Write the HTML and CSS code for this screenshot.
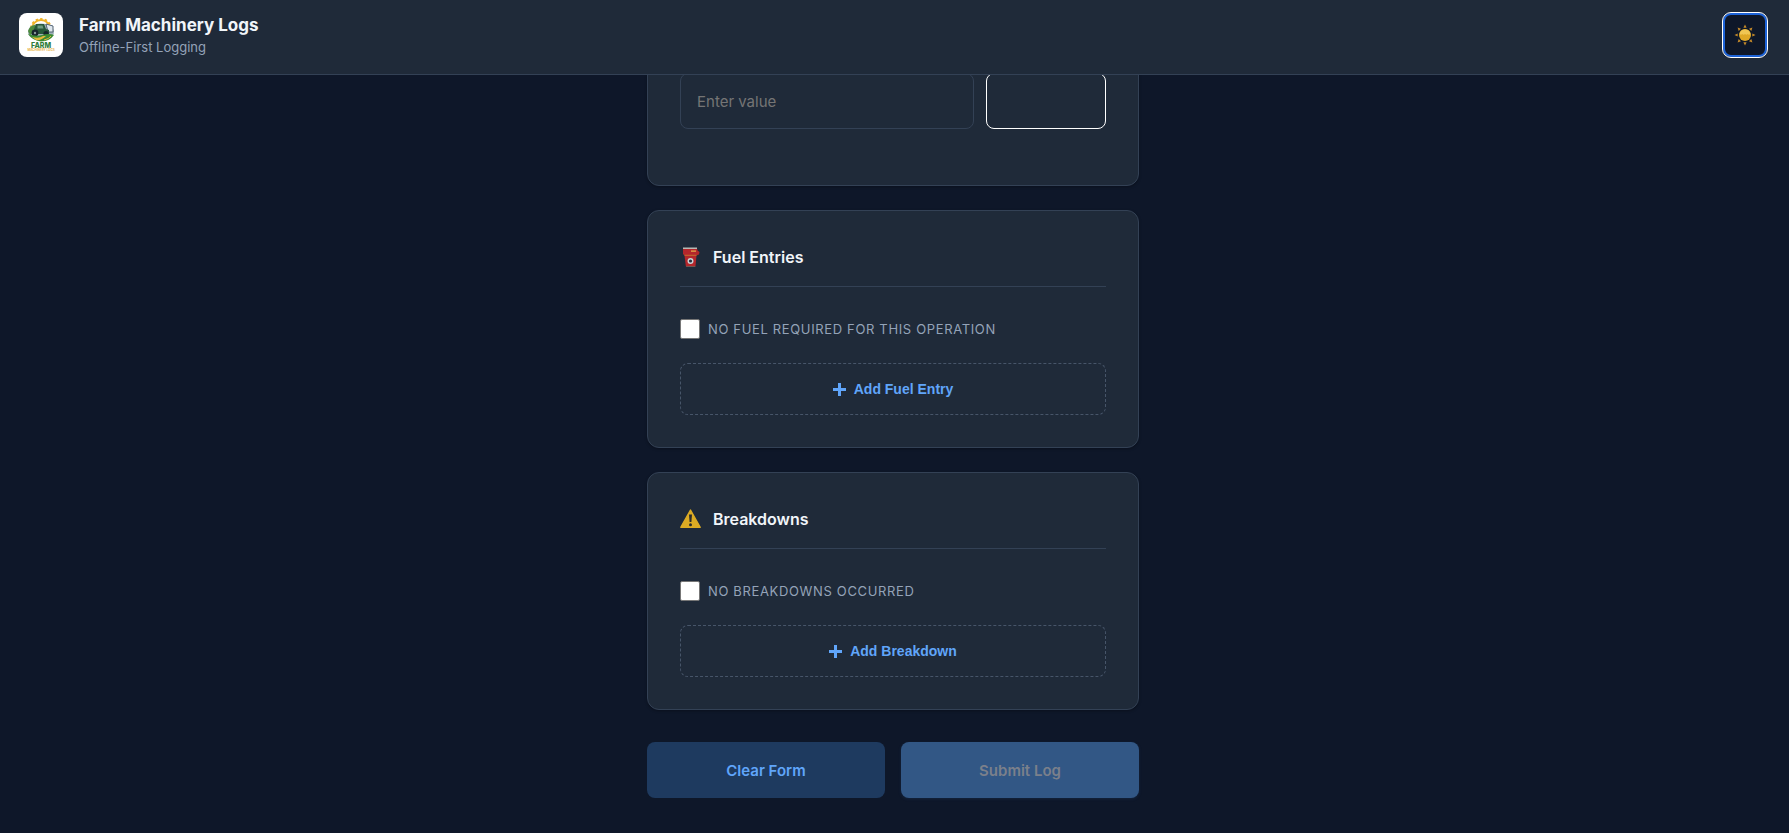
FILE: index.html
```html
<!DOCTYPE html>
<html lang="en">
<head>
  <meta charset="UTF-8">
  <meta name="viewport" content="width=device-width, initial-scale=1.0">
  <title>Farm Machinery Logs</title>
  <link rel="stylesheet" href="styles.css">
</head>
<body>

<header class="app-header">
  <div class="brand">
    <div class="logo">
      <svg width="30" height="34" viewBox="0 0 30 34" aria-hidden="true">
        <circle cx="15" cy="11" r="9" fill="none" stroke="#f0b429" stroke-width="2"/>
        <circle cx="15" cy="11" r="10" fill="none" stroke="#f0b429" stroke-width="2" stroke-dasharray="2.4 2.2"/>
        <ellipse cx="15" cy="14" rx="13" ry="8.5" fill="#9fb1b8"/>
        <path d="M2 13 Q4 7 9 7 L12 12 L4 17Z" fill="#4c8a3d"/>
        <path d="M20 6 L27 8 L27 14 L22 14Z" fill="#dfe7ee" stroke="#526273" stroke-width="1"/>
        <path d="M10 6h8l2 5 3 1v4H8v-5z" fill="#28583a"/>
        <path d="M11.5 7.5h5l1 3h-6z" fill="#6d9a80"/>
        <circle cx="9" cy="15" r="3.4" fill="#17252c"/>
        <circle cx="9" cy="15" r="1.2" fill="#8b989c"/>
        <circle cx="20" cy="15.5" r="2.6" fill="#17252c"/>
        <path d="M2 16 Q10 19 16 17 Q23 15 28 17 Q24 23 15 23.5 Q7 23 2 16Z" fill="#3c8b32"/>
        <path d="M6 19 Q13 21 17 18 L20 18 Q15 23 10 22Z" fill="#e5b83c"/>
        <path d="M18 22 Q23 21 25 18" fill="none" stroke="#e5b83c" stroke-width="1"/>
        <text x="15" y="29.5" text-anchor="middle" class="logo-name">FARM</text>
        <text x="15" y="33" text-anchor="middle" class="logo-sub">MACHINERY LOGS</text>
      </svg>
    </div>
    <div class="brand-text">
      <h1>Farm Machinery Logs</h1>
      <p>Offline-First Logging</p>
    </div>
  </div>
  <button type="button" class="theme-toggle" aria-label="Toggle theme">
    <svg width="22" height="22" viewBox="0 0 22 22" aria-hidden="true">
      <g fill="#c58a2b">
        <path id="ray" d="M11 .5l1.6 3.2h-3.2z"/>
        <use href="#ray" transform="rotate(45 11 11)"/>
        <use href="#ray" transform="rotate(90 11 11)"/>
        <use href="#ray" transform="rotate(135 11 11)"/>
        <use href="#ray" transform="rotate(180 11 11)"/>
        <use href="#ray" transform="rotate(225 11 11)"/>
        <use href="#ray" transform="rotate(270 11 11)"/>
        <use href="#ray" transform="rotate(315 11 11)"/>
      </g>
      <circle cx="11" cy="11" r="6" fill="#dfa826"/>
      <path d="M5.6 10a5.5 5.5 0 0 1 10.8 0q-1.500 1.500-2.700 0-1.300 1.500-2.700 0-1.300 1.500-2.700 0-1.300 1.500-2.700 0z" fill="#f0c653"/>
    </svg>
  </button>
</header>

<main class="container">
  <form>
    <section class="card">
      <div class="input-row">
        <input type="text" class="field" placeholder="Enter value" aria-label="Value">
        <select class="field unit" aria-label="Unit">
          <option value=""></option>
        </select>
      </div>
    </section>

    <section class="card">
      <div class="card-header">
        <svg class="card-icon" width="21" height="22" viewBox="0 0 21 22" aria-hidden="true">
          <path d="M3 2.5h14l.5 2 2 1.5-.5 2.500-2.500 1H4.500L3 8z" fill="#b3262b"/>
          <path d="M3 1.5h14v1.5H3z" fill="#b9b9b4"/>
          <path d="M11 4.500h5v1.200h-5z" fill="#e8b34b"/>
          <path d="M4.500 9.500h12L15.500 20q-.2 1-1.200 1H7q-1 0-1.200-1z" fill="#b3262b"/>
          <path d="M4.500 9.300h12" stroke="#c9702f"/>
          <path d="M6.300 20.500h9" stroke="#6d5752"/>
          <circle cx="10.500" cy="15" r="2.300" fill="#26323f" stroke="#c9d3d8" stroke-width="1.400"/>
        </svg>
        <h2>Fuel Entries</h2>
      </div>
      <label class="check-row">
        <input type="checkbox">
        <span>No fuel required for this operation</span>
      </label>
      <button type="button" class="add-btn">
        <svg width="13" height="13" viewBox="0 0 13 13" aria-hidden="true"><path d="M6.500 0v13M0 6.500h13" stroke="currentColor" stroke-width="3"/></svg>
        Add Fuel Entry
      </button>
    </section>

    <section class="card">
      <div class="card-header">
        <svg class="card-icon" width="21" height="22" viewBox="0 0 21 22" aria-hidden="true">
          <path d="M10.500 2L20.200 19.300H.8z" fill="#dcab24" stroke="#dcab24" stroke-width="1.400" stroke-linejoin="round"/>
          <path d="M9 6.500h3l-.6 7.500h-1.800z" fill="#2b2c2c"/>
          <circle cx="10.500" cy="16.700" r="1.500" fill="#2b2c2c"/>
        </svg>
        <h2>Breakdowns</h2>
      </div>
      <label class="check-row">
        <input type="checkbox">
        <span>No breakdowns occurred</span>
      </label>
      <button type="button" class="add-btn">
        <svg width="13" height="13" viewBox="0 0 13 13" aria-hidden="true"><path d="M6.500 0v13M0 6.500h13" stroke="currentColor" stroke-width="3"/></svg>
        Add Breakdown
      </button>
    </section>

    <div class="actions">
      <button type="reset" class="btn btn-clear">Clear Form</button>
      <button type="submit" class="btn btn-submit" disabled>Submit Log</button>
    </div>
  </form>
</main>

</body>
</html>
```
FILE: styles.css
```css
* {
  box-sizing: border-box;
}
body {
  margin: 0;
  background: #0e1729;
  color: #f1f5f9;
  font-family: Inter, sans-serif;
  font-size: 16px;
}
h1, h2, p {
  margin: 0;
}

/* Header */
.app-header {
  position: fixed;
  top: 0;
  left: 0;
  right: 0;
  z-index: 10;
  display: flex;
  justify-content: space-between;
  align-items: center;
  padding: 13px 22px 17px 19px;
  background: #1f2a39;
  border-bottom: 1px solid #334155;
}
.brand {
  display: flex;
  align-items: center;
  gap: 16px;
}
.logo {
  display: flex;
  align-items: center;
  justify-content: center;
  width: 44px;
  height: 44px;
  background: #fff;
  border-radius: 8px;
}
.logo-name {
  font-size: 7px;
  font-weight: 800;
  fill: #2f7d3a;
}
.logo-sub {
  font-size: 3px;
  font-weight: 700;
  fill: #e9b44a;
}
.brand-text h1 {
  font-size: 17px;
  font-weight: 700;
  line-height: 24px;
}
.brand-text p {
  color: #94a3b8;
  font-size: 13px;
  line-height: 20px;
}
.theme-toggle {
  display: flex;
  align-items: center;
  justify-content: center;
  width: 44px;
  height: 44px;
  padding: 0;
  background: #0e1729;
  border: 2px solid #1d63d8;
  border-radius: 8px;
  outline: 1px solid #fff;
  cursor: pointer;
}

/* Form */
.container {
  max-width: 495px;
  margin: 0 auto;
  padding: 40px 3px 35px 0;
}
.card {
  margin-bottom: 24px;
  padding: 32px;
  background: #1f2a39;
  border: 1px solid #334155;
  border-radius: 12px;
  box-shadow: 0 1px 3px rgba(0,0,0,0.3);
}
.card-header {
  display: flex;
  align-items: center;
  gap: 12px;
  margin-bottom: 32px;
  padding-bottom: 15px;
  border-bottom: 1px solid #334155;
}
.card-header h2 {
  font-size: 16px;
  font-weight: 600;
  line-height: 28px;
}
.input-row {
  display: flex;
  gap: 12px;
  margin-bottom: 24px;
}
.field {
  flex: 1;
  min-width: 0;
  height: 56px;
  padding: 0 16px;
  background: transparent;
  color: #f1f5f9;
  border: 1px solid #334155;
  border-radius: 8px;
  font-family: inherit;
  font-size: 15px;
}
.field::placeholder {
  color: #757575;
}
.unit {
  flex: 0 0 120px;
  appearance: none;
  border-color: #fff;
}
.check-row {
  display: flex;
  align-items: center;
  gap: 8px;
  margin-bottom: 24px;
  color: #94a3b8;
  font-size: 13px;
  line-height: 20px;
  letter-spacing: 0.05em;
  text-transform: uppercase;
  cursor: pointer;
}
.check-row input {
  appearance: none;
  width: 20px;
  height: 20px;
  margin: 0;
  background: #fff;
  border: 1px solid #767676;
  border-radius: 2px;
}
.check-row input:checked {
  background: #3b82f6;
}
.add-btn {
  display: flex;
  align-items: center;
  justify-content: center;
  gap: 8px;
  width: 100%;
  height: 52px;
  background: transparent;
  color: #60a5fa;
  border: 1px dashed #475569;
  border-radius: 8px;
  font-family: "Liberation Sans", Arial, sans-serif;
  font-size: 14px;
  font-weight: 700;
  cursor: pointer;
}

/* Buttons */
.actions {
  display: flex;
  gap: 16px;
  margin-top: 32px;
}
.btn {
  flex: 1;
  height: 56px;
  border: none;
  border-radius: 8px;
  font-family: inherit;
  font-size: 15px;
  font-weight: 600;
  cursor: pointer;
}
.btn-clear {
  background: #1e3a5f;
  color: #60a5fa;
}
.btn-submit {
  background: #325785;
  color: #7b808b;
  box-shadow: 0 1px 3px rgba(30,58,95,0.4);
  cursor: not-allowed;
}
```
